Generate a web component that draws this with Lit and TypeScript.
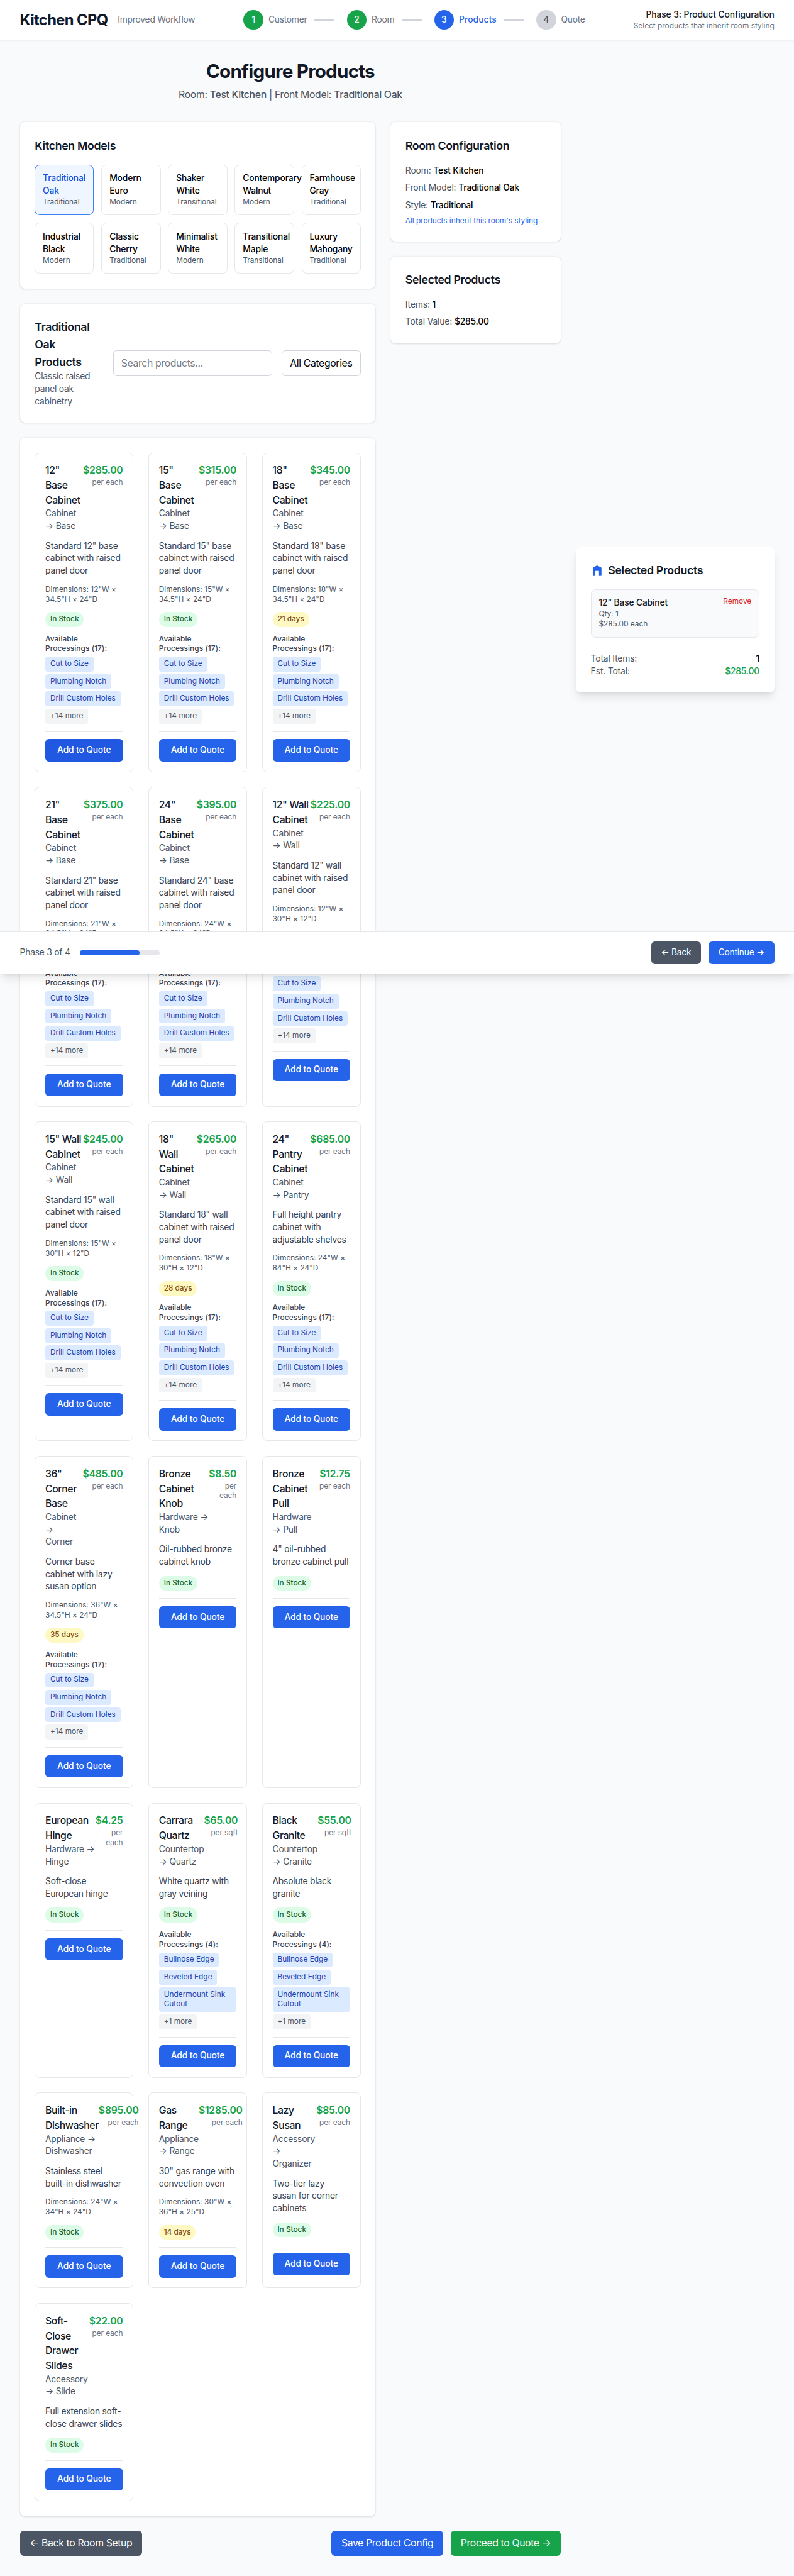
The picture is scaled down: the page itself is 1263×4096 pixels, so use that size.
import { LitElement, html, css, nothing } from "lit";
import { customElement, property } from "lit/decorators.js";
import { classMap } from "lit/directives/class-map.js";

interface Product {
  name: string;
  price: string;
  unit?: string;
  category: string;
  description: string;
  dimensions?: string;
  lead?: string;
  processings?: string[];
  processingCount?: number;
  hovered?: boolean;
}

const CABINET = ["Cut to Size", "Plumbing Notch", "Drill Custom Holes"];
const COUNTERTOP = ["Bullnose Edge", "Beveled Edge", "Undermount Sink Cutout"];

const cabinet = (
  name: string,
  price: string,
  category: string,
  description: string,
  dimensions: string,
  lead?: string,
  hovered = false
): Product => ({
  name,
  price,
  category,
  description,
  dimensions,
  lead,
  processings: CABINET,
  processingCount: 17,
  hovered,
});

const standard = (size: string, kind: string) => `Standard ${size} ${kind}\ncabinet with raised\npanel door`;

// Line breaks inside the strings are kept when the cards are drawn.
const PRODUCTS: Product[] = [
  cabinet('12"\nBase\nCabinet', "$285.00", "Cabinet\n→ Base", standard('12"', "base"), '12"W ×\n34.5"H × 24"D', undefined, true),
  cabinet('15"\nBase\nCabinet', "$315.00", "Cabinet\n→ Base", standard('15"', "base"), '15"W ×\n34.5"H × 24"D'),
  cabinet('18"\nBase\nCabinet', "$345.00", "Cabinet\n→ Base", standard('18"', "base"), '18"W ×\n34.5"H × 24"D', "21 days"),
  cabinet('21"\nBase\nCabinet', "$375.00", "Cabinet\n→ Base", standard('21"', "base"), '21"W ×\n34.5"H × 24"D'),
  cabinet('24"\nBase\nCabinet', "$395.00", "Cabinet\n→ Base", standard('24"', "base"), '24"W ×\n34.5"H × 24"D'),
  cabinet('12" Wall\nCabinet', "$225.00", "Cabinet\n→ Wall", standard('12"', "wall"), '12"W ×\n30"H × 12"D'),
  cabinet('15" Wall\nCabinet', "$245.00", "Cabinet\n→ Wall", standard('15"', "wall"), '15"W ×\n30"H × 12"D'),
  cabinet('18"\nWall\nCabinet', "$265.00", "Cabinet\n→ Wall", standard('18"', "wall"), '18"W ×\n30"H × 12"D', "28 days"),
  cabinet('24"\nPantry\nCabinet', "$685.00", "Cabinet\n→ Pantry", "Full height pantry\ncabinet with\nadjustable shelves", '24"W ×\n84"H × 24"D'),
  cabinet('36"\nCorner\nBase', "$485.00", "Cabinet\n→\nCorner", "Corner base\ncabinet with lazy\nsusan option", '36"W ×\n34.5"H × 24"D', "35 days"),
  { name: "Bronze\nCabinet\nKnob", price: "$8.50", unit: "per\neach", category: "Hardware →\nKnob", description: "Oil-rubbed bronze\ncabinet knob" },
  { name: "Bronze\nCabinet\nPull", price: "$12.75", category: "Hardware\n→ Pull", description: '4" oil-rubbed\nbronze cabinet pull' },
  { name: "European\nHinge", price: "$4.25", unit: "per\neach", category: "Hardware →\nHinge", description: "Soft-close\nEuropean hinge" },
  { name: "Carrara\nQuartz", price: "$65.00", unit: "per sqft", category: "Countertop\n→ Quartz", description: "White quartz with\ngray veining", processings: COUNTERTOP, processingCount: 4 },
  { name: "Black\nGranite", price: "$55.00", unit: "per sqft", category: "Countertop\n→ Granite", description: "Absolute black\ngranite", processings: COUNTERTOP, processingCount: 4 },
  { name: "Built-in\nDishwasher", price: "$895.00", category: "Appliance →\nDishwasher", description: "Stainless steel\nbuilt-in dishwasher", dimensions: '24"W ×\n34"H × 24"D' },
  { name: "Gas\nRange", price: "$1285.00", category: "Appliance\n→ Range", description: '30" gas range with\nconvection oven', dimensions: '30"W ×\n36"H × 25"D', lead: "14 days" },
  { name: "Lazy\nSusan", price: "$85.00", category: "Accessory\n→\nOrganizer", description: "Two-tier lazy\nsusan for corner\ncabinets" },
  { name: "Soft-\nClose\nDrawer\nSlides", price: "$22.00", category: "Accessory\n→ Slide", description: "Full extension soft-\nclose drawer slides" },
];

const MODELS: [string, string][] = [
  ["Traditional Oak", "Traditional"],
  ["Modern Euro", "Modern"],
  ["Shaker White", "Transitional"],
  ["Contemporary Walnut", "Modern"],
  ["Farmhouse Gray", "Traditional"],
  ["Industrial Black", "Modern"],
  ["Classic Cherry", "Traditional"],
  ["Minimalist White", "Modern"],
  ["Transitional Maple", "Transitional"],
  ["Luxury Mahogany", "Traditional"],
];

const STEPS = ["Customer", "Room", "Products", "Quote"];
const CURRENT_STEP = 3;

const base = css`
  *,
  *::before,
  *::after {
    box-sizing: border-box;
  }
  h1, h2, h3, h4, p {
    margin: 0;
    font-weight: inherit;
    font-size: inherit;
  }
  button {
    font: inherit;
    letter-spacing: inherit;
    margin: 0;
    border: 0;
    cursor: pointer;
  }
`;

@customElement("product-card")
export class ProductCard extends LitElement {
  @property({ attribute: false }) product!: Product;

  static styles = [
    base,
    css`
      :host {
        display: block;
        border: 1px solid #e5e7eb;
        border-radius: 8px;
        padding: 16px;
        box-sizing: border-box;
        min-width: 0;
      }
      .head {
        display: flex;
        justify-content: space-between;
        align-items: flex-start;
        margin-bottom: 12px;
      }
      .name,
      .category,
      .unit,
      .description,
      .dimensions {
        white-space: pre;
      }
      .name {
        font-weight: 500;
        color: #111827;
        letter-spacing: -0.4px;
      }
      .category {
        font-size: 14px;
        line-height: 20px;
        color: #4b5563;
        letter-spacing: -0.2px;
      }
      .cost {
        text-align: right;
      }
      .price {
        font-weight: 600;
        color: #16a34a;
        letter-spacing: -0.25px;
      }
      .unit {
        font-size: 12px;
        line-height: 16px;
        color: #6b7280;
        letter-spacing: -0.05px;
      }
      .description {
        font-size: 14px;
        line-height: 20px;
        color: #374151;
        margin-bottom: 12px;
        letter-spacing: -0.2px;
      }
      .dimensions {
        font-size: 12px;
        line-height: 16px;
        color: #4b5563;
        margin-bottom: 12px;
        letter-spacing: 0.04px;
      }
      .stock {
        display: flex;
        margin-bottom: 12px;
      }
      .badge {
        font-size: 12px;
        line-height: 16px;
        font-weight: 500;
        padding: 4px 8px;
        border-radius: 999px;
        background: #dcfce7;
        color: #166534;
        letter-spacing: 0;
      }
      .badge.lead {
        background: #fef9c3;
        color: #854d0e;
      }
      .processings {
        margin-bottom: 12px;
      }
      .label {
        font-size: 12px;
        line-height: 16px;
        font-weight: 500;
        color: #374151;
        margin-bottom: 4px;
        letter-spacing: 0.09px;
      }
      .chips {
        display: flex;
        flex-wrap: wrap;
        gap: 4px;
      }
      .chip {
        font-size: 12px;
        line-height: 16px;
        padding: 4px 8px;
        border-radius: 4px;
        background: #dbeafe;
        color: #1e40af;
        letter-spacing: 0.03px;
      }
      .chip.more {
        background: #f3f4f6;
        color: #4b5563;
      }
      .foot {
        border-top: 1px solid #e5e7eb;
        padding-top: 12px;
      }
      .add {
        display: block;
        width: 100%;
        padding: 8px 12px;
        font-size: 14px;
        line-height: 20px;
        font-weight: 500;
        letter-spacing: -0.13px;
        border-radius: 6px;
        background: #2563eb;
        color: #fff;
      }
      .add.hovered {
        background: #2058e1;
      }
    `,
  ];

  render() {
    const p = this.product;
    return html`
      <div class="head">
        <div>
          <h4 class="name">${p.name}</h4>
          <p class="category">${p.category}</p>
        </div>
        <div class="cost">
          <div class="price">${p.price}</div>
          <div class="unit">${p.unit ?? "per each"}</div>
        </div>
      </div>
      <p class="description">${p.description}</p>
      ${p.dimensions ? html`<div class="dimensions">Dimensions: ${p.dimensions}</div>` : nothing}
      <div class="stock">
        <span class=${classMap({ badge: true, lead: !!p.lead })}>${p.lead ?? "In Stock"}</span>
      </div>
      ${p.processings
        ? html`<div class="processings">
            <div class="label">Available<br />Processings (${p.processingCount}):</div>
            <div class="chips">
              ${p.processings.map((c) => html`<span class="chip">${c}</span>`)}
              <span class="chip more">+${p.processingCount! - p.processings.length} more</span>
            </div>
          </div>`
        : nothing}
      <div class="foot">
        <button class=${classMap({ add: true, hovered: !!p.hovered })}>Add to Quote</button>
      </div>
    `;
  }
}

@customElement("app-root")
export class AppRoot extends LitElement {
  static styles = [
    base,
    css`
      :host {
        display: block;
        overflow: hidden;
        background: #f9fafb;
      }
      .page {
        position: relative;
        zoom: 0.987;
        width: 1280px;
        height: 4150px;
        background: #f9fafb;
        color: #000;
        font-family: Inter, "Liberation Sans", sans-serif;
        font-size: 16px;
        line-height: 24px;
        letter-spacing: -0.37px;
      }
      .topbar {
        display: flex;
        align-items: center;
        justify-content: space-between;
        height: 65px;
        padding: 0 32px;
        background: #fff;
        border-bottom: 1px solid #e5e7eb;
        box-shadow: 0 1px 2px rgba(0, 0, 0, 0.05);
      }
      .brand {
        display: flex;
        align-items: center;
        gap: 16px;
      }
      .logo {
        font-size: 24px;
        line-height: 32px;
        font-weight: 700;
        color: #111827;
        letter-spacing: -0.6px;
      }
      .tagline {
        font-size: 14px;
        line-height: 20px;
        color: #6b7280;
        letter-spacing: -0.23px;
      }
      .steps {
        display: flex;
        gap: 8px;
      }
      .step {
        display: flex;
        align-items: center;
      }
      .dot {
        display: flex;
        align-items: center;
        justify-content: center;
        width: 32px;
        height: 32px;
        border-radius: 50%;
        background: #d1d5db;
        color: #4b5563;
        font-size: 14px;
        font-weight: 500;
        letter-spacing: 0;
      }
      .done .dot {
        background: #16a34a;
        color: #fff;
      }
      .current .dot {
        background: #2563eb;
        color: #fff;
      }
      .step-name {
        margin-left: 8px;
        font-size: 14px;
        line-height: 20px;
        color: #6b7280;
        letter-spacing: -0.25px;
      }
      .current .step-name {
        color: #2563eb;
        font-weight: 500;
        letter-spacing: 0.1px;
      }
      .link {
        width: 32px;
        height: 2px;
        margin: 0 12px;
        background: #d1d5db;
      }
      .phase {
        text-align: right;
      }
      .phase-title {
        font-size: 14px;
        line-height: 20px;
        font-weight: 500;
        color: #111827;
        letter-spacing: -0.07px;
      }
      .phase-sub {
        font-size: 12px;
        line-height: 16px;
        color: #6b7280;
        letter-spacing: 0.015px;
      }
      .body {
        display: flex;
        align-items: flex-start;
        gap: 24px;
        padding: 32px;
      }
      .main {
        width: 872px;
      }
      .heading {
        text-align: center;
        margin-bottom: 32px;
      }
      .title {
        font-size: 30px;
        line-height: 36px;
        font-weight: 700;
        color: #111827;
        margin-bottom: 8px;
        letter-spacing: -0.79px;
      }
      .subtitle {
        color: #4b5563;
        letter-spacing: -0.33px;
      }
      .strong {
        font-weight: 500;
      }
      .layout {
        display: grid;
        grid-template-columns: repeat(3, minmax(0, 1fr));
        gap: 24px;
      }
      .left {
        grid-column: span 2;
      }
      .left,
      .right {
        display: flex;
        flex-direction: column;
        gap: 24px;
      }
      .card {
        background: #fff;
        border-radius: 8px;
        padding: 24px;
        box-shadow: 0 1px 3px rgba(0, 0, 0, 0.1), 0 1px 2px -1px rgba(0, 0, 0, 0.1);
      }
      .card-title {
        font-size: 18px;
        line-height: 28px;
        font-weight: 600;
        color: #111827;
        letter-spacing: -0.34px;
      }
      .spaced {
        margin-bottom: 16px;
      }
      .models {
        display: grid;
        grid-template-columns: repeat(5, minmax(0, 1fr));
        gap: 12px;
      }
      .model {
        border: 1px solid #e5e7eb;
        border-radius: 8px;
        padding: 12px;
        background: transparent;
        text-align: left;
        color: #000;
      }
      .model.selected {
        border-color: #3b82f6;
        background: #eff6ff;
        color: #1d4ed8;
      }
      .model-name {
        font-size: 14px;
        line-height: 20px;
        font-weight: 500;
        letter-spacing: -0.15px;
      }
      .model-style {
        font-size: 12px;
        line-height: 16px;
        color: #4b5563;
        letter-spacing: 0;
      }
      .filter {
        display: flex;
        align-items: center;
        justify-content: space-between;
      }
      .filter-text {
        width: 104px;
      }
      .muted {
        font-size: 14px;
        line-height: 20px;
        color: #4b5563;
        letter-spacing: -0.21px;
      }
      .controls {
        display: flex;
        gap: 16px;
      }
      .search,
      .select {
        height: 42px;
        margin: 0;
        padding: 8px 12px;
        border: 1px solid #d1d5db;
        border-radius: 6px;
        background: #fff;
        color: #000;
        font: inherit;
        letter-spacing: -0.37px;
      }
      .search {
        width: 256px;
      }
      .search::placeholder {
        color: #757b87;
      }
      .picker {
        position: relative;
        width: 127px;
      }
      .select {
        width: 100%;
        appearance: none;
      }
      .chevron {
        position: absolute;
        right: 17px;
        top: 19px;
        width: 8px;
        height: 5px;
        fill: none;
        stroke: #6b7280;
        stroke-width: 1.2;
        pointer-events: none;
      }
      .products {
        display: grid;
        grid-template-columns: repeat(3, minmax(0, 1fr));
        gap: 24px;
      }
      .facts {
        display: flex;
        flex-direction: column;
        gap: 8px;
        font-size: 14px;
        line-height: 20px;
        color: #4b5563;
        letter-spacing: -0.12px;
      }
      .value {
        font-weight: 500;
        color: #000;
        letter-spacing: -0.17px;
      }
      .note {
        font-size: 12px;
        line-height: 16px;
        color: #2563eb;
        letter-spacing: -0.01px;
      }
      .actions {
        display: flex;
        justify-content: space-between;
        margin-top: 24px;
      }
      .group {
        display: flex;
        gap: 12px;
      }
      .btn {
        padding: 8px 16px;
        border-radius: 6px;
        color: #fff;
      }
      .btn.small {
        font-size: 14px;
        line-height: 20px;
        letter-spacing: -0.25px;
      }
      .gray {
        background: #4b5563;
      }
      .blue {
        background: #2563eb;
      }
      .green {
        background: #16a34a;
      }
      .summary {
        width: 320px;
        margin-top: 784px;
        padding: 24px;
        background: #fff;
        border-radius: 8px;
        box-shadow: 0 10px 15px -3px rgba(0, 0, 0, 0.1), 0 4px 6px -4px rgba(0, 0, 0, 0.1);
      }
      .summary-head {
        display: flex;
        align-items: center;
        gap: 8px;
        margin-bottom: 16px;
      }
      .icon {
        width: 20px;
        height: 20px;
        fill: #2563eb;
      }
      .item {
        display: flex;
        justify-content: space-between;
        align-items: flex-start;
        padding: 12px;
        background: #f9fafb;
        border: 1px solid #e5e7eb;
        border-radius: 8px;
        font-size: 12px;
        line-height: 16px;
        color: #4b5563;
        letter-spacing: 0;
      }
      .item-name {
        font-size: 14px;
        line-height: 20px;
        font-weight: 500;
        color: #111827;
        letter-spacing: -0.15px;
      }
      .remove {
        padding: 0;
        background: none;
        color: #dc2626;
      }
      .totals {
        margin-top: 12px;
        padding-top: 12px;
        border-top: 1px solid #e5e7eb;
        font-size: 14px;
        line-height: 20px;
        color: #4b5563;
        letter-spacing: -0.15px;
      }
      .row {
        display: flex;
        justify-content: space-between;
      }
      .sum {
        font-weight: 500;
        color: #16a34a;
      }
      .dock {
        position: absolute;
        left: 0;
        right: 0;
        top: 1500px;
        display: flex;
        align-items: center;
        justify-content: space-between;
        height: 69px;
        padding: 0 32px;
        background: #fff;
        border-top: 1px solid #e5e7eb;
        box-shadow: 0 10px 15px -3px rgba(0, 0, 0, 0.1), 0 4px 6px -4px rgba(0, 0, 0, 0.1);
      }
      .progress {
        display: flex;
        align-items: center;
        gap: 16px;
      }
      .track {
        width: 128px;
        height: 8px;
        border-radius: 4px;
        background: #e5e7eb;
      }
      .fill {
        height: 8px;
        border-radius: 4px;
        background: #2563eb;
      }
    `,
  ];

  private renderStep(name: string, index: number) {
    const n = index + 1;
    const classes = { step: true, done: n < CURRENT_STEP, current: n === CURRENT_STEP };
    return html`<div class=${classMap(classes)}>
      <div class="dot">${n}</div>
      <span class="step-name">${name}</span>
      ${n < STEPS.length ? html`<div class="link"></div>` : nothing}
    </div>`;
  }

  render() {
    return html`
      <div class="page">
        <header class="topbar">
          <div class="brand">
            <h1 class="logo">Kitchen CPQ</h1>
            <span class="tagline">Improved Workflow</span>
          </div>
          <nav class="steps">${STEPS.map((s, i) => this.renderStep(s, i))}</nav>
          <div class="phase">
            <div class="phase-title">Phase 3: Product Configuration</div>
            <div class="phase-sub">Select products that inherit room styling</div>
          </div>
        </header>

        <div class="body">
          <main class="main">
            <div class="heading">
              <h2 class="title">Configure Products</h2>
              <p class="subtitle">
                Room: <span class="strong">Test Kitchen</span> | Front Model:
                <span class="strong">Traditional Oak</span>
              </p>
            </div>
            <div class="layout">
              <div class="left">
                <section class="card">
                  <h3 class="card-title spaced">Kitchen Models</h3>
                  <div class="models">
                    ${MODELS.map(
                      ([name, style], i) => html`<button class=${classMap({ model: true, selected: i === 0 })}>
                        <div class="model-name">${name}</div>
                        <div class="model-style">${style}</div>
                      </button>`
                    )}
                  </div>
                </section>
                <section class="card filter">
                  <div class="filter-text">
                    <h3 class="card-title">Traditional Oak Products</h3>
                    <p class="muted">Classic raised panel oak cabinetry</p>
                  </div>
                  <div class="controls">
                    <input class="search" type="text" placeholder="Search products..." />
                    <div class="picker">
                      <select class="select">
                        <option>All Categories</option>
                      </select>
                      <svg class="chevron" viewBox="0 0 8 5"><path d="M1 .8l3 3 3-3" /></svg>
                    </div>
                  </div>
                </section>
                <section class="card products">
                  ${PRODUCTS.map((p) => html`<product-card .product=${p}></product-card>`)}
                </section>
              </div>
              <div class="right">
                <section class="card">
                  <h3 class="card-title spaced">Room Configuration</h3>
                  <div class="facts">
                    <div>Room: <span class="value">Test Kitchen</span></div>
                    <div>Front Model: <span class="value">Traditional Oak</span></div>
                    <div>Style: <span class="value">Traditional</span></div>
                    <div class="note">All products inherit this room's styling</div>
                  </div>
                </section>
                <section class="card">
                  <h3 class="card-title spaced">Selected Products</h3>
                  <div class="facts">
                    <div>Items: <span class="value">1</span></div>
                    <div>Total Value: <span class="value">$285.00</span></div>
                  </div>
                </section>
              </div>
            </div>
            <div class="actions">
              <button class="btn gray">← Back to Room Setup</button>
              <div class="group">
                <button class="btn blue">Save Product Config</button>
                <button class="btn green">Proceed to Quote →</button>
              </div>
            </div>
          </main>

          <aside class="summary">
            <div class="summary-head">
              <svg class="icon" viewBox="0 0 20 20">
                <path d="M10 2L3.6 5.3A1 1 0 003 6.200V18a1 1 0 001 1h3v-8h6v8h3a1 1 0 001-1V6.200a1 1 0 00-.6-.9L10 2z" />
              </svg>
              <h3 class="card-title">Selected Products</h3>
            </div>
            <div class="item">
              <div>
                <div class="item-name">12" Base Cabinet</div>
                <div>Qty: 1</div>
                <div>$285.00 each</div>
              </div>
              <button class="remove">Remove</button>
            </div>
            <div class="totals">
              <div class="row"><span>Total Items:</span><span class="value">1</span></div>
              <div class="row"><span>Est. Total:</span><span class="sum">$285.00</span></div>
            </div>
          </aside>
        </div>

        <footer class="dock">
          <div class="progress">
            <span class="muted">Phase 3 of 4</span>
            <div class="track"><div class="fill" style="width:${(CURRENT_STEP / STEPS.length) * 100}%"></div></div>
          </div>
          <div class="group">
            <button class="btn small gray">← Back</button>
            <button class="btn small blue">Continue →</button>
          </div>
        </footer>
      </div>
    `;
  }
}
